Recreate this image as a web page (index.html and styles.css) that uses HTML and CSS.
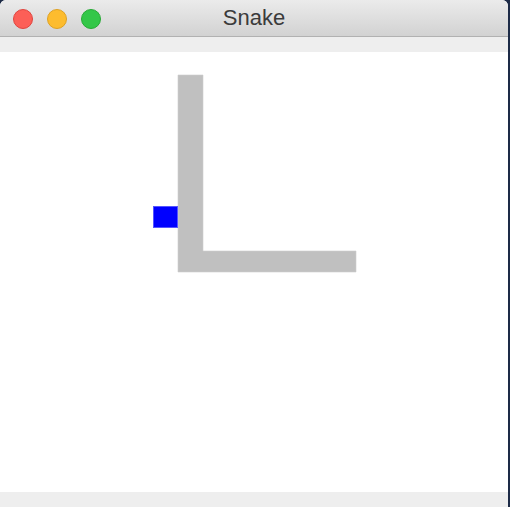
FILE: index.html
```html
<!DOCTYPE html>
<html>
<head>
<meta charset="utf-8">
<link rel="stylesheet" href="styles.css">
</head>
<body>
<div class="window">
  <div class="titlebar">
    <div class="lights">
      <span class="light red"></span>
      <span class="light yellow"></span>
      <span class="light green"></span>
    </div>
    <div class="title">Snake</div>
  </div>
  <div class="strip"></div>
  <div class="canvas">
    <svg class="board" width="508" height="440" viewBox="0 0 508 440">
      <path d="M178 23 H203 V199 H356 V220 H178 Z" fill="#c0c0c0" stroke="#cfcfcf" stroke-width="0.6"/>
      <rect x="153.5" y="154.5" width="24" height="21" fill="#0000ff" stroke="#5555ff" stroke-width="1"/>
    </svg>
  </div>
  <div class="strip bottom"></div>
</div>
</body>
</html>
```

FILE: styles.css
```css
html, body {
  margin: 0;
  padding: 0;
}
body {
  background: #1d2b47;
  width: 510px;
  height: 507px;
  overflow: hidden;
}
.window {
  width: 508px;
  height: 507px;
  display: flex;
  flex-direction: column;
  background: #ffffff;
  border-radius: 6px 6px 0 0;
  overflow: hidden;
}
.titlebar {
  position: relative;
  height: 36px;
  flex: none;
  background: linear-gradient(#ebebeb, #d2d2d2);
  border-bottom: 1px solid #b1b1b1;
  display: flex;
  align-items: center;
}
.lights {
  display: flex;
  gap: 14px;
  padding-left: 13px;
  padding-top: 2px;
}
.light {
  width: 20px;
  height: 20px;
  border-radius: 50%;
  box-sizing: border-box;
}
.red {
  background: #fc5f57;
  border: 1px solid #e0443e;
}
.yellow {
  background: #fdbc2e;
  border: 1px solid #dea123;
}
.green {
  background: #33c748;
  border: 1px solid #27aa35;
}
.title {
  position: absolute;
  left: 0;
  right: 0;
  top: 5px;
  text-align: center;
  font-family: "Liberation Sans", Arial, sans-serif;
  font-size: 22px;
  color: #3b3b3b;
  padding-left: 0;
}
.strip {
  height: 15px;
  flex: none;
  background: #eeeeee;
}
.strip.bottom {
  height: 15px;
}
.canvas {
  height: 440px;
  flex: none;
  background: #ffffff;
}
.board {
  display: block;
}
```
